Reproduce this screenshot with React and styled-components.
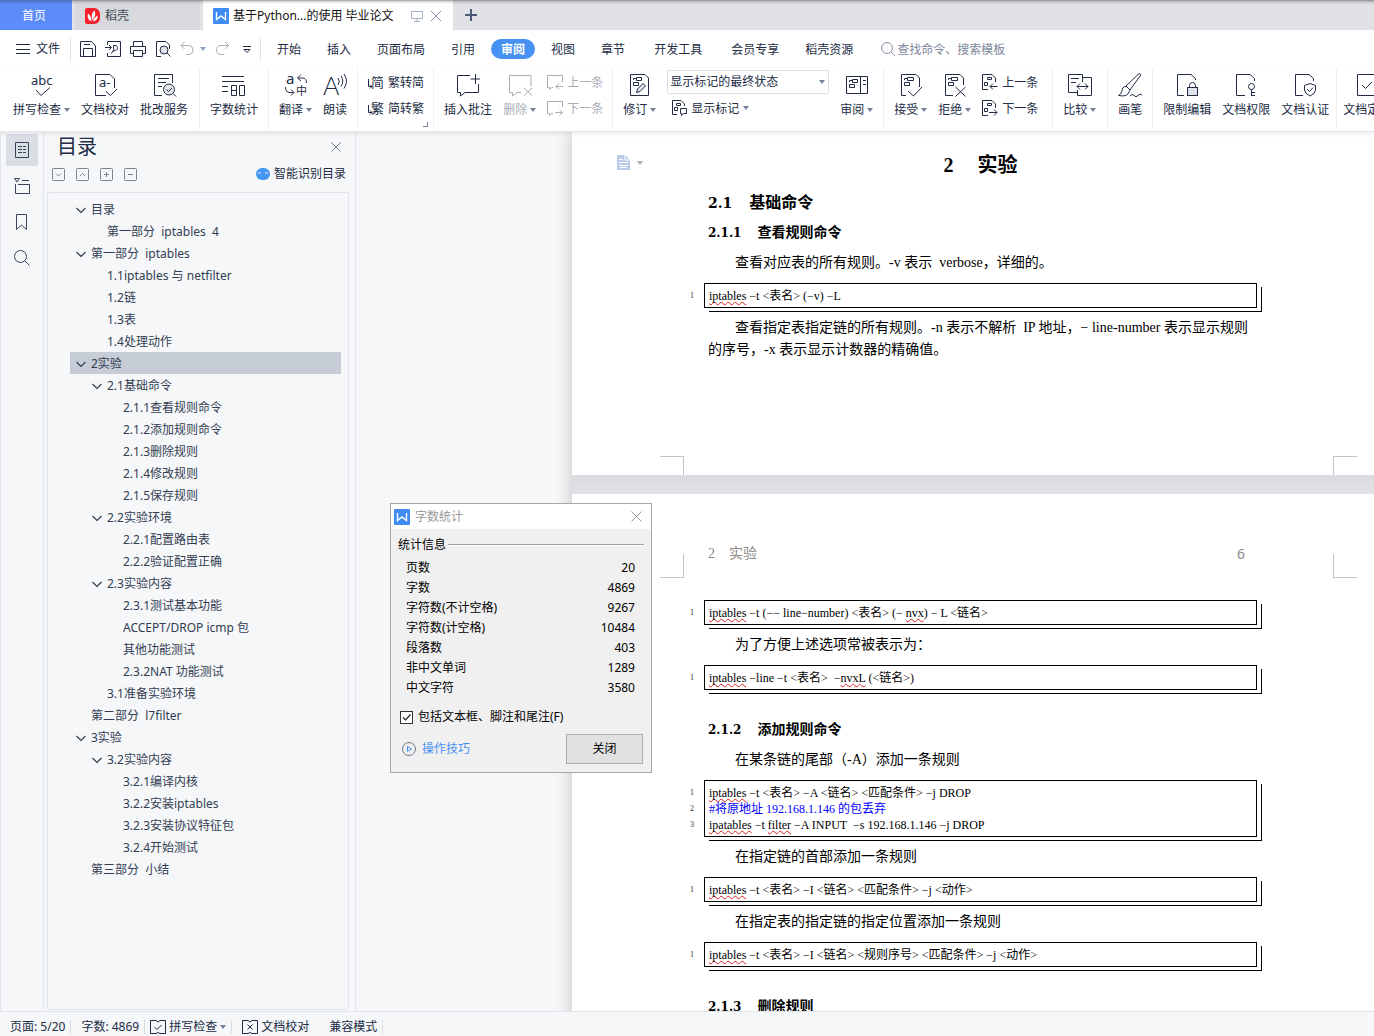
import React, { useState } from 'react'
import styled, { createGlobalStyle, css } from 'styled-components'

const GlobalStyle = createGlobalStyle`
  * {
    box-sizing: border-box;
  }
  body {
    margin: 0;
    background: #f5f7f9;
    color: #222c45;
    font: 12px/16px "Noto Sans", "Noto Sans CJK SC", sans-serif;
  }
  button, select, input {
    font: inherit;
    color: inherit;
  }
  button {
    border: 0;
    padding: 0;
    background: none;
    white-space: nowrap;
    cursor: pointer;
  }
  ul, ol {
    list-style: none;
    margin: 0;
    padding: 0;
  }
  h1, h2, h3, p {
    margin: 0;
  }
  svg {
    display: block;
    flex-shrink: 0;
    overflow: visible;
  }
`

const Window = styled.div`
  display: flex;
  flex-direction: column;
  height: 100vh;
  overflow: hidden;
`

/* ---------- tab strip ---------- */

const TabStrip = styled.header`
  display: flex;
  align-items: stretch;
  gap: 3px;
  height: 30px;
  flex-shrink: 0;
  background: linear-gradient(#8d8e91, #c9cacd 2px, #e1e2e5 5px);
`

const Tab = styled.button`
  display: flex;
  align-items: center;
  gap: 5px;
  width: ${p => p.$width}px;
  padding: 2px 10px 0;
  text-align: left;
  color: #3d4657;
  background: linear-gradient(#8d8e91, #c4c5c8 2px, #d8d9dc 5px);
  ${p => p.$kind === 'home' && css`
    justify-content: center;
    padding-right: 14px;
    color: #fff;
    background: linear-gradient(#4a6cb0, #5c8cf7 4px);
  `}
  ${p => p.$kind === 'active' && css`
    gap: 4px;
    padding-right: 8px;
    color: #111;
    background: linear-gradient(#a0a0a2, #e6e6e6 2px, #fff 4px);
  `}
`

const TabTitle = styled.span`
  flex: 1;
`

const NewTab = styled.button`
  padding: 0 9px;
  color: #4c5a73;
`

/* ---------- menu row ---------- */

const MenuBar = styled.nav`
  display: flex;
  align-items: center;
  height: 38px;
  flex-shrink: 0;
  background: #fff;
`

const FileButton = styled.button`
  display: flex;
  align-items: center;
  gap: 6px;
  padding: 0 10px 0 16px;
`

const QuickTools = styled.div`
  display: flex;
  align-items: center;
  gap: 9px;
  height: 24px;
  padding: 0 4px 0 9px;
  margin-right: 3px;
  border: solid #dfe2e8;
  border-width: 0 1px;
`

const QuickButton = styled.button`
  display: flex;
  align-items: center;
  gap: 4px;
  color: ${p => (p.$dim ? '#a9adb6' : '#222c45')};
`

const MenuItem = styled.button`
  height: 20px;
  padding: 2px ${p => (p.$wide ? 16 : 13)}px 0;
  ${p => p.$active && css`
    margin: 0 3px;
    padding: 1px 10px 0;
    border-radius: 10px;
    color: #fff;
    font-weight: 700;
    background: #4791f2;
  `}
`

const SearchBox = styled.label`
  display: flex;
  align-items: center;
  gap: 1px;
  margin-left: 15px;
  color: #8a94a8;
`

const SearchInput = styled.input`
  width: 130px;
  padding: 1px 0 0;
  border: 0;
  outline: 0;
  background: none;
  &::placeholder {
    color: #7c879c;
    opacity: 1;
  }
`

/* ---------- ribbon ---------- */

const Ribbon = styled.div`
  position: relative;
  z-index: 2;
  display: flex;
  height: 64px;
  flex-shrink: 0;
  padding: 0 0 2px 3px;
  background: #fff;
  border-bottom: 1px solid #e4e5e8;
  box-shadow: 0 2px 4px rgba(0, 0, 0, 0.08);
`

const Group = styled.div`
  position: relative;
  display: flex;
  align-items: flex-start;
  flex-shrink: 0;
  gap: 11px;
  padding: 0 ${p => p.$end || 10}px 0 10px;
  border-right: 1px solid #eeeff2;
  &:last-child {
    padding-left: 6px;
  }
`

const Launcher = styled.button`
  position: absolute;
  right: 5px;
  bottom: 2px;
  width: 5px;
  height: 5px;
  border: solid #76839a;
  border-width: 0 1px 1px 0;
`

const BigTool = styled.button`
  display: flex;
  flex-direction: column;
  align-items: center;
  gap: 5px;
  padding-top: 5px;
  color: ${p => (p.$dim ? '#a9adb6' : '#222c45')};
`

const ToolLabel = styled.span`
  display: flex;
  align-items: center;
  gap: 3px;
`

const SmallTools = styled.div`
  display: flex;
  flex-direction: column;
  gap: ${p => (p.$tight ? 6 : 10)}px;
  padding-top: ${p => (p.$tight ? 2 : 6)}px;
`

const SmallTool = styled.button`
  display: flex;
  align-items: center;
  gap: 4px;
  height: 16px;
  padding-left: ${p => (p.$inset ? 4 : 0)}px;
  color: ${p => (p.$dim ? '#a9adb6' : '#222c45')};
`

const SmallLabel = styled.span`
  padding-top: 2px;
`

const SelectWrap = styled.label`
  display: grid;
  align-items: center;
  width: 162px;
  height: 24px;
  border: 1px solid #dcdfe5;
  border-radius: 2px;
  > * {
    grid-area: 1 / 1;
  }
  > svg {
    justify-self: end;
    margin-right: 3px;
    pointer-events: none;
  }
`

const Select = styled.select`
  appearance: none;
  width: 100%;
  padding: 0 14px 0 2px;
  border: 0;
  outline: 0;
  background: none;
`

/* ---------- side rail and outline ---------- */

const Workspace = styled.div`
  display: flex;
  flex: 1;
  min-height: 0;
`

const Rail = styled.div`
  display: flex;
  flex-direction: column;
  align-items: center;
  gap: 4px;
  width: 44px;
  flex-shrink: 0;
  padding-top: 2px;
  border: solid #e3e6ec;
  border-width: 0 1px;
`

const RailButton = styled.button`
  display: grid;
  place-items: center;
  width: 32px;
  height: 32px;
  border-radius: 2px;
  color: #38445c;
  background: ${p => (p.$active ? '#dadfe6' : 'none')};
`

const Outline = styled.aside`
  display: flex;
  flex-direction: column;
  width: 312px;
  flex-shrink: 0;
  padding: 0 6px 1px 3px;
  border-right: 1px solid #e3e6ec;
`

const OutlineHead = styled.div`
  display: flex;
  align-items: center;
  justify-content: space-between;
  height: 30px;
  padding: 0 8px 0 10px;
  color: #6f7a8e;
`

const OutlineTitle = styled.h2`
  font-size: 20px;
  font-weight: 400;
  line-height: 30px;
  color: #222c45;
`

const OutlineTools = styled.div`
  display: flex;
  align-items: center;
  gap: 11px;
  height: 24px;
  margin-bottom: 6px;
  padding: 0 3px 0 5px;
  color: #7b8493;
`

const SmartButton = styled.button`
  display: flex;
  align-items: center;
  gap: 4px;
  margin-left: auto;
  color: #222c45;
`

const Tree = styled.ul`
  flex: 1;
  min-height: 0;
  overflow: hidden;
  padding: 5px 7px 0 22px;
  border: 1px solid #e1e4ea;
  border-radius: 2px;
`

const TreeRow = styled.button`
  display: flex;
  align-items: center;
  gap: 5px;
  width: 100%;
  height: 22px;
  padding: 2px 0 0 ${p => 6 + p.$level * 16}px;
  color: #333d52;
  background: ${p => (p.$selected ? '#c5ccd5' : 'none')};
`

const Twist = styled.span`
  width: 10px;
`

const TreeText = styled.span`
  white-space: pre;
`

/* ---------- document ---------- */

const Canvas = styled.main`
  position: relative;
  display: flex;
  flex: 1;
  min-width: 0;
  overflow: hidden;
  padding-left: 216px;
`

const Pages = styled.div`
  display: flex;
  flex-direction: column;
  flex: 1;
  gap: 19px;
  min-width: 0;
  height: max-content;
  background: linear-gradient(#dbdcdf 347px, #e1e2e5 360px);
  box-shadow: 0 0 16px rgba(0, 0, 0, 0.22);
`

const Page = styled.section`
  position: relative;
  background: #fff;
  color: #000;
`

const PageBody = styled.div`
  display: flex;
  flex-direction: column;
  padding: ${p => p.$top}px 117px ${p => p.$bottom}px 118px;
`

const Title = styled.h1`
  display: flex;
  justify-content: center;
  gap: 24px;
  padding-left: 14px;
  font: 700 20px/32px "Liberation Serif", "Noto Sans CJK SC", serif;
`

const Heading = styled.h2`
  display: flex;
  align-items: baseline;
  gap: 17px;
  margin: 9px 0 0 18px;
  font: 700 16px/22px "Noto Sans CJK SC", sans-serif;
`

const SubHeading = styled.h3`
  display: flex;
  align-items: baseline;
  gap: 16px;
  margin: ${p => (p.$first ? 9 : 28)}px 0 2px 18px;
  font: 700 14px/20px "Noto Sans CJK SC", sans-serif;
`

const Num = styled.span`
  font-family: "DejaVu Serif", serif;
  font-size: ${p => p.$size}px;
  line-height: 16px;
`

const Paragraph = styled.p`
  margin: 9px 0 0 18px;
  text-indent: 27px;
  white-space: nowrap;
  font: 14px/22px "Liberation Serif", "Noto Sans CJK SC", serif;
`

const Code = styled.div`
  display: grid;
  grid-template-columns: 14px 1fr;
  margin-top: 9px;
  font: 12px/16px "Liberation Serif", "Noto Sans CJK SC", serif;
`

const LineNumbers = styled.ol`
  padding-top: 5px;
  font-size: 8px;
  color: #333;
`

const CodeLines = styled.div`
  padding: 4px 4px 3px;
  white-space: pre;
  border: 1px solid #000;
  background: #fff;
  box-shadow: 4px 3px 0 #fff, 5px 4px 0 #000;
`

const CodeLine = styled.div`
  height: 16px;
  color: ${p => (p.$comment ? '#0000ff' : '#000')};
`

const Typo = styled.span`
  text-decoration: underline wavy #e02020 1px;
  text-decoration-skip-ink: none;
  text-underline-offset: 1px;
`

const PageFoot = styled.div`
  display: flex;
  justify-content: space-between;
  padding: 0 17px 0 88px;
`

const PageHead = styled.div`
  display: flex;
  gap: 24px;
  height: 84px;
  padding: 49px 17px 0 88px;
  align-items: flex-end;
`

const HeadText = styled.div`
  display: flex;
  align-self: flex-start;
  flex: 1;
  gap: 14px;
  padding-right: 64px;
  color: #8a8a8a;
  font: 14px/22px "Liberation Serif", "Noto Sans CJK SC", serif;
`

const PageNo = styled.span`
  margin-left: auto;
  font-family: "Noto Sans", sans-serif;
`

const Corner = styled.span`
  width: 24px;
  height: ${p => (p.$foot ? 19 : 24)}px;
  border: 0 solid #c4c4c4;
  ${p => (p.$foot ? 'border-top-width: 1px;' : 'border-bottom-width: 1px;')}
  ${p => (p.$right ? 'border-left-width: 1px;' : 'border-right-width: 1px;')}
`

const PasteHint = styled.button`
  position: absolute;
  left: 45px;
  top: 23px;
  display: flex;
  align-items: center;
  gap: 7px;
  color: #b9cbe8;
`

/* ---------- word count dialog ---------- */

const Dialog = styled.div`
  position: absolute;
  left: 34px;
  top: 371px;
  width: 262px;
  color: #000;
  background: #f0f0f0;
  border: 1px solid #a5a7aa;
`

const DialogHead = styled.div`
  display: flex;
  align-items: center;
  gap: 5px;
  height: 25px;
  padding: 0 9px 0 3px;
  color: #999;
  background: #fff;
`

const DialogTitle = styled.span`
  flex: 1;
`

const DialogBody = styled.div`
  padding: 8px 7px 8px;
`

const SectionLabel = styled.div`
  display: flex;
  align-items: center;
  gap: 2px;
  margin-bottom: 5px;
  &::after {
    content: "";
    flex: 1;
    border-top: 1px solid #a0a0a0;
    border-bottom: 1px solid #fff;
  }
`

const Stats = styled.table`
  width: 100%;
  border-collapse: collapse;
  th, td {
    height: 20px;
    padding: 0 9px 0 8px;
    font-weight: 400;
    text-align: left;
  }
  td {
    text-align: right;
  }
`

const CheckRow = styled.label`
  display: flex;
  align-items: center;
  gap: 5px;
  margin: 11px 0 9px 2px;
`

const CheckBox = styled.input`
  appearance: none;
  width: 13px;
  height: 13px;
  margin: 0;
  border: 1px solid #333;
  background: #fff;
  &:checked {
    background: #fff url("data:image/svg+xml,%3Csvg xmlns='http://www.w3.org/2000/svg' viewBox='0 0 11 11'%3E%3Cpath d='M2 5.5l2.5 2.5L9.5 2.5' fill='none' stroke='%23222' stroke-width='1.2'/%3E%3C/svg%3E") center / 11px;
  }
`

const DialogFoot = styled.div`
  display: flex;
  align-items: center;
  justify-content: space-between;
  padding: 0 1px 0 4px;
`

const TipLink = styled.a`
  display: flex;
  align-items: center;
  gap: 6px;
  color: #4a90f0;
  text-decoration: none;
`

const CloseButton = styled.button`
  width: 77px;
  height: 30px;
  background: #e1e1e1;
  border: 1px solid #adadad;
`

/* ---------- status bar ---------- */

const StatusBar = styled.footer`
  display: flex;
  align-items: center;
  height: 25px;
  flex-shrink: 0;
  padding-top: 6px;
  border-top: 1px solid #e1e4ea;
`

const StatusItem = styled.button`
  display: flex;
  align-items: center;
  gap: 3px;
  height: 14px;
  padding: 0 ${p => p.$end || 5}px 0 ${p => p.$start || 10}px;
  border-right: ${p => (p.$open ? 0 : 1)}px solid #d9dce2;
`

/* ---------- icons ---------- */

const Icon = ({ size = 24, children, ...rest }) => (
  <svg width={size} height={size} viewBox={`0 0 ${size} ${size}`} fill="none" stroke="currentColor" aria-hidden="true" {...rest}>
    {children}
  </svg>
)

const Glyph = ({ x, y, size, font = 'Noto Sans', children }) => (
  <text x={x} y={y} fontSize={size} fontFamily={`"${font}", "Noto Sans CJK SC", sans-serif`} fill="currentColor" stroke="none">
    {children}
  </text>
)

const Caret = ({ color = '#76839a' }) => (
  <svg width="6" height="4" viewBox="0 0 6 4" aria-hidden="true">
    <path d="M0 0H6L3 4Z" fill={color} />
  </svg>
)

const Cross = ({ size = 10 }) => (
  <Icon size={size}>
    <path d={`M.5 .5L${size - 0.5} ${size - 0.5}M${size - 0.5} .5L.5 ${size - 0.5}`} />
  </Icon>
)

const WpsLogo = () => (
  <svg width="16" height="16" viewBox="0 0 16 16" aria-hidden="true">
    <rect width="16" height="16" rx="1" fill="#3f8bf3" />
    <path d="M3.500 4V11.500L8 8L12.500 11.500V4" fill="none" stroke="#fff" strokeWidth="1.400" />
  </svg>
)

const DocerLogo = () => (
  <svg width="15" height="16" viewBox="0 0 15 16" aria-hidden="true">
    <path d="M2 0H9A6 6 0 0 1 15 6V10A6 6 0 0 1 9 16H2A2 2 0 0 1 0 14V2A2 2 0 0 1 2 0Z" fill="#f5222d" />
    <path d="M9.500 2.500C11 5.500 10 9.500 7.500 12C6 8.500 6.500 5 9.500 2.500Z" fill="#fff" />
    <path d="M3 5.500C5.500 7.500 6.500 10 6.500 13C3.500 12.500 2 9.500 3 5.500ZM12.800 7.500C12.800 11 11 13 8 13.500C8.500 11 10 9 12.800 7.500Z" fill="#fff" />
  </svg>
)

const marks = <path d="M8.500 4.500H14.500V7.500H8.500ZM5.500 9.500H10.500V12.500H5.500ZM5.500 7V5.500H8" />

const icons = {
  spell: (
    <Icon>
      <Glyph x="1" y="12" size="13">abc</Glyph>
      <path d="M6 17L11 22.500L20 14.500" />
    </Icon>
  ),
  proof: (
    <Icon>
      <path d="M13 22.500H2.500V1.500H17L21.500 6V15" />
      <Glyph x="6" y="14" size="13">a-</Glyph>
      <path d="M13 18.500L17.500 22.500L24 16" />
    </Icon>
  ),
  correct: (
    <Icon>
      <path d="M10 22.500H2.500V1.500H20.500V10M6 5.500H17M6 9.500H14M6 13.500H10" />
      <circle cx="17" cy="16.500" r="5.500" fill="#dfe3ea" />
      <path d="M14.500 16.500L16.500 18.500L20 15M21 20.500L24 23.500" />
    </Icon>
  ),
  count: (
    <Icon>
      <path d="M0 3.500H22M0 8.500H22M0 13.500H6M0 18.500H6M9.500 12.500H14.500V22.500H9.500ZM9.500 17.500H14.500M17.500 12.500H22.500V22.500H17.500Z" />
    </Icon>
  ),
  translate: (
    <Icon>
      <Glyph x="2" y="11" size="15">a</Glyph>
      <Glyph x="12" y="22" size="11">中</Glyph>
      <path d="M17 1.500L13.500 5L17 8M14 5H18.500Q22.500 5 22.500 10M1.500 14Q1.500 19.500 6 19.500H9.500M7 16.500L10 19.500L7 22.500" />
    </Icon>
  ),
  read: (
    <Icon>
      <Glyph x="0" y="22" size="25" font="Lato Light">A</Glyph>
      <path d="M15 5Q17.500 8 15 12M18 3Q21.500 8 18 13.500M21 1Q26 8 21 15.500" />
    </Icon>
  ),
  toSimple: (
    <Icon size={16}>
      <Glyph x="3" y="13" size="13">简</Glyph>
      <path d="M.5 5V12.500H4M2 10.500L4 12.500L2 14.500" />
    </Icon>
  ),
  toTrad: (
    <Icon size={16}>
      <Glyph x="3" y="13" size="13">繁</Glyph>
      <path d="M.5 5V12.500H4M2 10.500L4 12.500L2 14.500" />
    </Icon>
  ),
  addNote: (
    <Icon>
      <path d="M14 2.500H1.500V19.500H4.500V23L9 19.500H22.500V11M19.500 1V11M14.500 6H24" />
    </Icon>
  ),
  delNote: (
    <Icon>
      <path d="M23 13V2.500H1.500V19.500H4.500V23L9 19.500H13M16 15L24 22.500M24 15L16 22.500" />
    </Icon>
  ),
  prevNote: (
    <Icon size={16}>
      <path d="M15.500 8V1.500H.5V13.500H2.500V15.500L5 13.500H6M16 12.500H9M12 9.500L9 12.500L12 15.500" />
    </Icon>
  ),
  nextNote: (
    <Icon size={16}>
      <path d="M15.500 7V1.500H.5V13.500H2.500V15.500L5 13.500H6M8 12.500H15.500M12.500 9.500L15.500 12.500L12.500 15.500" />
    </Icon>
  ),
  revise: (
    <Icon>
      <path d="M2.500 1.500H17L20.500 5V22.500H2.500Z" />
      <path d="M8.500 4.500H13.500V7.500H8.500ZM5.500 9.500H10.500V12.500H5.500ZM5.500 7V5.500H8" />
      <path d="M8.500 19.500L9.500 16L15 10.500L17.500 13L12 18.500Z" fill="#dfe3ea" />
    </Icon>
  ),
  showMarks: (
    <Icon size={16}>
      <path d="M6 14.500H1.500V.5H10L13.500 4V6M5.500 3.500H9.500V5.500H5.500ZM3.500 7.500H6.500V10.500H3.500ZM9.500 8.500H15.500V13.500H12.500L10.500 15.500V13.500H9.500Z" />
    </Icon>
  ),
  pane: (
    <Icon>
      <path d="M1.500 3.500H22.500V20.500H1.500ZM15.500 3.500V20.500M18 7.500H21M18 11.500H21M7.500 6.500H12.500V9.500H7.500ZM4.500 11.500H9.500V14.500H4.500ZM4.500 9V7.500H7" />
    </Icon>
  ),
  accept: (
    <Icon>
      <path d="M7 22.500H2.500V1.500H17L20.500 5V14M9 18L14.500 23L23 14" />
      {marks}
    </Icon>
  ),
  reject: (
    <Icon>
      <path d="M10 22.500H2.500V1.500H17L20.500 5V12M12.500 14L22.500 23.500M22.500 14L12.500 23.500" />
      {marks}
    </Icon>
  ),
  prevMark: (
    <Icon size={16}>
      <path d="M6 15.500H.5V.5H10L13.500 4V8M5.500 3.500H9.500V5.500H5.500ZM2.500 8.500H5.500V11.500H2.500ZM15.500 12.500H8M11 9.500L8 12.500L11 15.500" />
    </Icon>
  ),
  nextMark: (
    <Icon size={16}>
      <path d="M6 15.500H.5V.5H10L13.500 4V8M5.500 3.500H9.500V5.500H5.500ZM2.500 8.500H5.500V11.500H2.500ZM7 12.500H15M12 9.500L15 12.500L12 15.500" />
    </Icon>
  ),
  compare: (
    <Icon>
      <path d="M9 19.500H.5V1.500H14.500V9M3 5.500H11M3 9.500H8M14.500 4.500H23.500V22.500H9.500V17M9 13.500H20M12 10.500L9 13.500L12 16.500M17 10.500L20 13.500L17 16.500" />
    </Icon>
  ),
  pen: (
    <Icon>
      <path d="M8 13L20 1.500Q23 -.5 22.500 2.500L12 17M8 13L12 17M8 13.500Q4 13.500 4 18Q3 21.500 .5 22.500Q9 24 10.500 20Q11.500 18 12 17M12 23Q14 20 16 22.500T20 22.500T24 22" />
    </Icon>
  ),
  lock: (
    <Icon>
      <path d="M9 22.500H2.500V1.500H16L20.500 5.500V7" />
      <path d="M14.500 15V12.500A3 3 0 0 1 20.500 12.500V15" />
      <rect x="12.500" y="14.500" width="10" height="8" fill="#dfe3ea" />
    </Icon>
  ),
  key: (
    <Icon>
      <path d="M11 22.500H2.500V1.500H16L20.500 5.500V8" />
      <circle cx="17.500" cy="13.500" r="3" />
      <path d="M17.500 16.500V23M17.500 19.500H21M17.500 22.500H21" />
    </Icon>
  ),
  shield: (
    <Icon>
      <path d="M10 22.500H2.500V1.500H16L20.500 5.500V8" />
      <path d="M17 10.500L22.500 12.500V17Q22.500 20.500 17 23Q11.500 20.500 11.500 17V12.500Z" />
      <path d="M14 16L16.500 18.500L20 14.500" />
    </Icon>
  ),
  final: (
    <Icon>
      <path d="M2.500 1.500H20.500V22.500H2.500ZM7 12L10.500 15.500L17 9" />
    </Icon>
  ),
}

const quickIcons = [
  ['保存', <path key="p" d="M.5 .5H11.500L15.500 5V15.500H.5ZM3.500 15V7.500H12.500V15M4 3.500H10" />],
  ['输出为PDF', <path key="p" d="M2.500 4V.5H15.500V15.500H2.500V12M0 6.500H6M4 4L6.500 6.500L4 9M6.500 12.500Q10 9 8.500 4.500Q12 3.500 12.500 6.500T8 10" />],
  ['打印', <path key="p" d="M3.500 5V.5H12.500V5M3.500 12.500H.5V5.500H15.500V12.500H12.500M3.500 9.500H12.500V15.500H3.500Z" />],
  ['打印预览', <g key="p"><path d="M6 15.500H1.500V.5H11L14.500 4V8" /><circle cx="9" cy="9" r="4" fill="#dfe3ea" /><path d="M12 12L15.500 15.500" /></g>],
]

const Tool = ({ icon, label, caret, dim }) => (
  <BigTool $dim={dim} disabled={dim}>
    {icons[icon]}
    <ToolLabel>
      {label}
      {caret && <Caret />}
    </ToolLabel>
  </BigTool>
)

const MiniTool = ({ icon, label, caret, dim, inset }) => (
  <SmallTool $dim={dim} $inset={inset} disabled={dim}>
    {icons[icon]}
    <SmallLabel>{label}</SmallLabel>
    {caret && <Caret />}
  </SmallTool>
)

const menu = ['开始', '插入', '页面布局', '引用', '审阅', '视图', '章节', '开发工具', '会员专享', '稻壳资源']

/* [level, text, has children] */
const outline = [
  [0, '目录', true],
  [1, '第一部分  iptables  4'],
  [0, '第一部分  iptables', true],
  [1, '1.1iptables 与 netfilter'],
  [1, '1.2链'],
  [1, '1.3表'],
  [1, '1.4处理动作'],
  [0, '2实验', true],
  [1, '2.1基础命令', true],
  [2, '2.1.1查看规则命令'],
  [2, '2.1.2添加规则命令'],
  [2, '2.1.3删除规则'],
  [2, '2.1.4修改规则'],
  [2, '2.1.5保存规则'],
  [1, '2.2实验环境', true],
  [2, '2.2.1配置路由表'],
  [2, '2.2.2验证配置正确'],
  [1, '2.3实验内容', true],
  [2, '2.3.1测试基本功能'],
  [2, 'ACCEPT/DROP icmp 包'],
  [2, '其他功能测试'],
  [2, '2.3.2NAT 功能测试'],
  [1, '3.1准备实验环境'],
  [0, '第二部分  l7filter'],
  [0, '3实验', true],
  [1, '3.2实验内容', true],
  [2, '3.2.1编译内核'],
  [2, '3.2.2安装iptables'],
  [2, '3.2.3安装协议特征包'],
  [2, '3.2.4开始测试'],
  [0, '第三部分  小结'],
]

const stats = [
  ['页数', 20],
  ['字数', 4869],
  ['字符数(不计空格)', 9267],
  ['字符数(计空格)', 10484],
  ['段落数', 403],
  ['非中文单词', 1289],
  ['中文字符', 3580],
]

const foldIcons = [
  ['全部折叠', 'M4 5.500L6.500 8L9 5.500'],
  ['全部展开', 'M4 8L6.500 5.500L9 8'],
  ['展开', 'M4 6.500H9M6.500 4V9'],
  ['收起', 'M4 6.500H9'],
]

const CodeBlock = ({ lines }) => (
  <Code>
    <LineNumbers>
      {lines.map((_, i) => <li key={i}>{i + 1}</li>)}
    </LineNumbers>
    <CodeLines>
      {lines.map((line, i) => (
        <CodeLine key={i} $comment={typeof line === 'string' && line.startsWith('#')}>{line}</CodeLine>
      ))}
    </CodeLines>
  </Code>
)

const ipt = <Typo>iptables</Typo>

function WordCount({ onClose }) {
  const [notes, setNotes] = useState(true)
  return (
    <Dialog role="dialog" aria-label="字数统计">
      <DialogHead>
        <WpsLogo />
        <DialogTitle>字数统计</DialogTitle>
        <button aria-label="关闭窗口" onClick={onClose}><Cross size={11} /></button>
      </DialogHead>
      <DialogBody>
        <SectionLabel>统计信息</SectionLabel>
        <Stats>
          <tbody>
            {stats.map(([name, value]) => (
              <tr key={name}>
                <th scope="row">{name}</th>
                <td>{value}</td>
              </tr>
            ))}
          </tbody>
        </Stats>
        <CheckRow>
          <CheckBox type="checkbox" checked={notes} onChange={e => setNotes(e.target.checked)} />
          包括文本框、脚注和尾注(F)
        </CheckRow>
        <DialogFoot>
          <TipLink href="#tips">
            <Icon size={14}>
              <circle cx="7" cy="7" r="6.500" stroke="#6f7a8e" />
              <path d="M5.500 4.500V9.500L9.500 7Z" />
            </Icon>
            操作技巧
          </TipLink>
          <CloseButton onClick={onClose}>关闭</CloseButton>
        </DialogFoot>
      </DialogBody>
    </Dialog>
  )
}

function App() {
  const [dialog, setDialog] = useState(true)
  const [selected, setSelected] = useState(7)

  return (
    <Window>
      <GlobalStyle />
      <TabStrip>
        <Tab $kind="home" $width={72}>首页</Tab>
        <Tab $width={125}>
          <DocerLogo />
          稻壳
        </Tab>
        <Tab $kind="active" $width={250}>
          <WpsLogo />
          <TabTitle>基于Python...的使用 毕业论文</TabTitle>
          <Icon size={12} stroke="#a3afc4"><path d="M.5 1.500H11.500V8.500H.5ZM6 8.500V11M3 11.500H9" /></Icon>
          <Icon size={18} stroke="#8290aa"><path d="M4 4L14 14M14 4L4 14" /></Icon>
        </Tab>
        <NewTab aria-label="新建标签">
          <Icon size={12} strokeWidth="2"><path d="M0 6H12M6 0V12" /></Icon>
        </NewTab>
      </TabStrip>

      <MenuBar>
        <FileButton>
          <Icon size={14}><path d="M0 2.500H14M0 7.500H14M0 11.500H14" /></Icon>
          文件
        </FileButton>
        <QuickTools>
          {quickIcons.map(([name, shape]) => (
            <QuickButton key={name} aria-label={name}><Icon size={16}>{shape}</Icon></QuickButton>
          ))}
          <QuickButton $dim aria-label="撤销">
            <Icon size={16}><path d="M4.500 1L1 4.500L4.500 8M1.500 4.500H9Q13 5 13 9T9 13.500H6" /></Icon>
            <Caret color="#8fa3c4" />
          </QuickButton>
          <QuickButton $dim aria-label="恢复">
            <Icon size={16}><path d="M10 1L13.500 4.500L10 8M13 4.500H6Q1.500 5 1.500 9T6 13.500H9" /></Icon>
          </QuickButton>
          <QuickButton aria-label="自定义">
            <Icon size={16}><path d="M3 5.500H11M4 8.500L7 11.500L10 8.500Z" /></Icon>
          </QuickButton>
        </QuickTools>
        {menu.map(name => (
          <MenuItem key={name} $active={name === '审阅'} $wide={name === '开发工具'}>{name}</MenuItem>
        ))}
        <SearchBox>
          <Icon size={15}><circle cx="6" cy="6" r="5.500" /><path d="M10 10L14 14" /></Icon>
          <SearchInput aria-label="搜索" placeholder="查找命令、搜索模板" />
        </SearchBox>
      </MenuBar>

      <Ribbon>
        <Group $end={11}>
          <Tool icon="spell" label="拼写检查" caret />
          <Tool icon="proof" label="文档校对" />
          <Tool icon="correct" label="批改服务" />
        </Group>
        <Group>
          <Tool icon="count" label="字数统计" />
        </Group>
        <Group>
          <Tool icon="translate" label="翻译" caret />
          <Tool icon="read" label="朗读" />
        </Group>
        <Group $end={9}>
          <SmallTools>
            <MiniTool icon="toSimple" label="繁转简" />
            <MiniTool icon="toTrad" label="简转繁" />
          </SmallTools>
          <Launcher aria-label="更多设置" />
        </Group>
        <Group $end={9}>
          <Tool icon="addNote" label="插入批注" />
          <Tool icon="delNote" label="删除" caret dim />
          <SmallTools>
            <MiniTool icon="prevNote" label="上一条" dim />
            <MiniTool icon="nextNote" label="下一条" dim />
          </SmallTools>
        </Group>
        <Group>
          <Tool icon="revise" label="修订" caret />
          <SmallTools $tight>
            <SelectWrap>
              <Select aria-label="显示状态" defaultValue="final">
                <option value="final">显示标记的最终状态</option>
              </Select>
              <Caret />
            </SelectWrap>
            <MiniTool icon="showMarks" label="显示标记" caret inset />
          </SmallTools>
          <Tool icon="pane" label="审阅" caret />
        </Group>
        <Group $end={14}>
          <Tool icon="accept" label="接受" caret />
          <Tool icon="reject" label="拒绝" caret />
          <SmallTools>
            <MiniTool icon="prevMark" label="上一条" />
            <MiniTool icon="nextMark" label="下一条" />
          </SmallTools>
        </Group>
        <Group $end={11}>
          <Tool icon="compare" label="比较" caret />
        </Group>
        <Group>
          <Tool icon="pen" label="画笔" />
        </Group>
        <Group $end={7}>
          <Tool icon="lock" label="限制编辑" />
          <Tool icon="key" label="文档权限" />
          <Tool icon="shield" label="文档认证" />
        </Group>
        <Group>
          <Tool icon="final" label="文档定稿" />
        </Group>
      </Ribbon>

      <Workspace>
        <Rail>
          <RailButton $active aria-label="目录">
            <Icon size={16}><path d="M1.500 .5H14.500V15.500H1.500ZM4 4.500H8M9 4.500H12M4 7.500H8M9 7.500H12M4 10.500H8M9 10.500H12" /></Icon>
          </RailButton>
          <RailButton aria-label="章节">
            <Icon size={16}><path d="M.5 .5H5.500L3 4ZM8 2.500H15M1.500 6V15.500H15.500V6.500H4" /></Icon>
          </RailButton>
          <RailButton aria-label="书签">
            <Icon size={16}><path d="M2.500 .5H12.500V15.500L7.500 11L2.500 15.500Z" /></Icon>
          </RailButton>
          <RailButton aria-label="查找">
            <Icon size={16}><circle cx="6.500" cy="6.500" r="6" /><path d="M11 11L15.500 15.500" /></Icon>
          </RailButton>
        </Rail>

        <Outline>
          <OutlineHead>
            <OutlineTitle>目录</OutlineTitle>
            <button aria-label="关闭目录"><Cross /></button>
          </OutlineHead>
          <OutlineTools>
            {foldIcons.map(([name, d]) => (
              <button key={name} aria-label={name}>
                <Icon size={13}><rect x=".5" y=".5" width="12" height="12" rx="1" /><path d={d} /></Icon>
              </button>
            ))}
            <SmartButton>
              <Icon size={14} stroke="none">
                <rect y="1" width="14" height="12" rx="6" fill="#4596f3" />
                <path d="M2 6.500Q3.500 4.500 5 6.500M9 6.500Q10.500 4.500 12 6.500" stroke="#fff" />
              </Icon>
              智能识别目录
            </SmartButton>
          </OutlineTools>
          <Tree>
            {outline.map(([level, text, open], i) => (
              <li key={text}>
                <TreeRow $level={level} $selected={i === selected} onClick={() => setSelected(i)}>
                  <Twist>
                    {open && <Icon size={10} strokeWidth="1.200"><path d="M.5 3L5 7.500L9.500 3" /></Icon>}
                  </Twist>
                  <TreeText>{text}</TreeText>
                </TreeRow>
              </li>
            ))}
          </Tree>
        </Outline>

        <Canvas>
          <Pages>
            <Page>
              <PasteHint aria-label="段落布局">
                <svg width="13" height="15" viewBox="0 0 13 15" aria-hidden="true">
                  <path d="M0 0H8L13 5V15H0Z" fill="currentColor" />
                  <path d="M8 0V5H13M2 4.500H6M2 7.500H11M2 10.500H11M3 12.500H10" stroke="#fff" fill="none" />
                </svg>
                <Caret color="#a9acb2" />
              </PasteHint>
              <PageBody $top={17} $bottom={95}>
                <Title><span>2</span>实验</Title>
                <Heading><Num $size={14}>2.1</Num>基础命令</Heading>
                <SubHeading $first><Num $size={12}>2.1.1</Num>查看规则命令</SubHeading>
                <Paragraph>查看对应表的所有规则。-v 表示&nbsp; verbose，详细的。</Paragraph>
                <CodeBlock lines={[<>{ipt} −t &lt;表名&gt; (−v) −L</>]} />
                <Paragraph>
                  查看指定表指定链的所有规则。-n 表示不解析&nbsp; IP 地址，− line-number 表示显示规则
                  <br />
                  的序号，-x 表示显示计数器的精确值。
                </Paragraph>
              </PageBody>
              <PageFoot>
                <Corner $foot />
                <Corner $foot $right />
              </PageFoot>
            </Page>

            <Page>
              <PageHead>
                <Corner />
                <HeadText>
                  <span>2</span>
                  实验
                  <PageNo>6</PageNo>
                </HeadText>
                <Corner $right />
              </PageHead>
              <PageBody $top={13} $bottom={40}>
                <CodeBlock lines={[<>{ipt} −t (−− line−number) &lt;表名&gt; (− <Typo>nvx</Typo>) − L &lt;链名&gt;</>]} />
                <Paragraph>为了方便上述选项常被表示为：</Paragraph>
                <CodeBlock lines={[<>{ipt} −line −t &lt;表名&gt;  −<Typo>nvxL</Typo> (&lt;链名&gt;)</>]} />
                <SubHeading><Num $size={12}>2.1.2</Num>添加规则命令</SubHeading>
                <Paragraph>在某条链的尾部（-A）添加一条规则</Paragraph>
                <CodeBlock
                  lines={[
                    <>{ipt} −t &lt;表名&gt; −A &lt;链名&gt; &lt;匹配条件&gt; −j DROP</>,
                    '#将原地址 192.168.1.146 的包丢弃',
                    <><Typo>ipatables</Typo> −t <Typo>filter</Typo> −A INPUT  −s 192.168.1.146 −j DROP</>,
                  ]}
                />
                <Paragraph>在指定链的首部添加一条规则</Paragraph>
                <CodeBlock lines={[<>{ipt} −t &lt;表名&gt; −I &lt;链名&gt; &lt;匹配条件&gt; −j &lt;动作&gt;</>]} />
                <Paragraph>在指定表的指定链的指定位置添加一条规则</Paragraph>
                <CodeBlock lines={[<>{ipt} −t &lt;表名&gt; −I &lt;链名&gt; &lt;规则序号&gt; &lt;匹配条件&gt; −j &lt;动作&gt;</>]} />
                <SubHeading><Num $size={12}>2.1.3</Num>删除规则</SubHeading>
              </PageBody>
            </Page>
          </Pages>
          {dialog && <WordCount onClose={() => setDialog(false)} />}
        </Canvas>
      </Workspace>

      <StatusBar>
        <StatusItem>页面: 5/20</StatusItem>
        <StatusItem>字数: 4869</StatusItem>
        <StatusItem $start={5}>
          <Icon size={16}><path d="M6 14.500H.5V1.500H6L8 3L10 1.500H15.500V14.500H10L8 13.500L6 14.500M4.500 8L7 10.500L11.500 6" /></Icon>
          拼写检查
          <Caret />
        </StatusItem>
        <StatusItem $end={19} $open>
          <Icon size={16}><path d="M6 14.500H.5V1.500H6L8 3L10 1.500H15.500V14.500H10L8 13.500L6 14.500M5.500 5.500L10.500 10.500M10.500 5.500L5.500 10.500" /></Icon>
          文档校对
        </StatusItem>
        <StatusItem $start={1}>兼容模式</StatusItem>
      </StatusBar>
    </Window>
  )
}

export default App
